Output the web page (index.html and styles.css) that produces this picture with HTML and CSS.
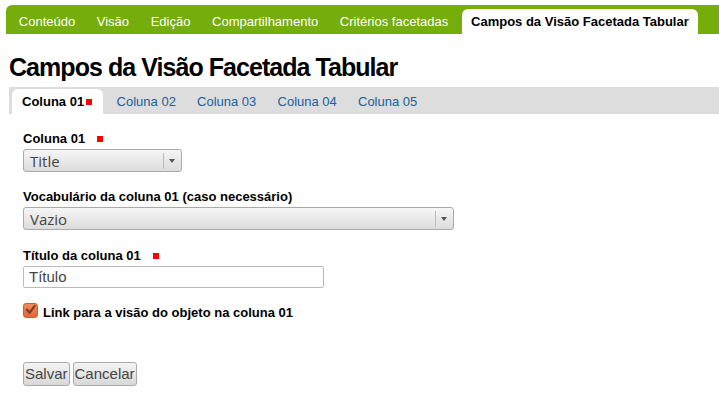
FILE: index.html
```html
<!DOCTYPE html>
<html lang="pt">
<head>
<meta charset="utf-8">
<title>Campos da Visão Facetada Tabular</title>
<link rel="stylesheet" href="styles.css">
</head>
<body>
<nav class="topnav">
  <a class="tnav">Conteúdo</a>
  <a class="tnav">Visão</a>
  <a class="tnav">Edição</a>
  <a class="tnav">Compartilhamento</a>
  <a class="tnav">Critérios facetadas</a>
  <a class="tnav active">Campos da Visão Facetada Tabular</a>
</nav>
<h1 class="title">Campos da Visão Facetada Tabular</h1>
<div class="subtabs">
  <a class="stab active">Coluna 01<span class="req req-tab"></span></a>
  <a class="stab">Coluna 02</a>
  <a class="stab">Coluna 03</a>
  <a class="stab">Coluna 04</a>
  <a class="stab">Coluna 05</a>
</div>
<form class="form">
  <div class="field f1">
    <label class="lbl">Coluna 01<span class="req"></span></label>
    <div class="select sel-small"><span class="sel-text">Title</span><span class="sel-arrow"></span></div>
  </div>
  <div class="field">
    <label class="lbl">Vocabulário da coluna 01 (caso necessário)</label>
    <div class="select sel-wide"><span class="sel-text">Vazio</span><span class="sel-arrow"></span></div>
  </div>
  <div class="field">
    <label class="lbl">Título da coluna 01<span class="req"></span></label>
    <div class="input">Título</div>
  </div>
  <div class="check-row">
    <span class="checkbox"><svg width="14" height="14" viewBox="0 0 14 14"><path d="M3 6.5 L6 10 L11.5 2.5" fill="none" stroke="#7a3a1e" stroke-width="2.2" stroke-linecap="round" stroke-linejoin="round"/></svg></span>
    <span class="check-label">Link para a visão do objeto na coluna 01</span>
  </div>
  <div class="buttons">
    <span class="btn">Salvar</span><span class="btn">Cancelar</span>
  </div>
</form>
</body>
</html>
```
FILE: styles.css
```css
* { box-sizing: border-box; }
body {
  margin: 0;
  background: #fff;
  font-family: "Liberation Sans", Arial, sans-serif;
  font-size: 13px;
  color: #000;
}
.topnav {
  margin: 5px 0 0 6px;
  height: 29px;
  background: #75ad0a;
  border-top-left-radius: 6px;
  display: flex;
  align-items: flex-end;
  padding-left: 2px;
}
.tnav {
  color: #fff;
  padding: 0 10.8px;
  height: 25px;
  line-height: 26px;
  white-space: nowrap;
}
.tnav.active {
  background: #fff;
  color: #000;
  font-weight: bold;
  padding: 0 9px;
  margin-left: 3px;
  border-radius: 6px 6px 0 0;
}
.title {
  margin: 18px 0 0 9px;
  font-size: 25px;
  line-height: 30px;
  font-weight: bold;
  letter-spacing: -0.95px;
}
.subtabs {
  margin: 5px 0 0 9px;
  height: 27px;
  background: #dddddd;
  display: flex;
  align-items: flex-end;
  padding-left: 3px;
}
.stab {
  color: #20609a;
  padding: 0 10.6px;
  height: 25px;
  line-height: 26px;
  white-space: nowrap;
}
.stab.active {
  background: #fff;
  color: #000;
  font-weight: bold;
  padding: 0 10px;
  width: 91px;
  margin-right: 3px;
  border-radius: 6px 6px 0 0;
}
.req {
  display: inline-block;
  width: 6px;
  height: 6px;
  background: #ff0000;
  margin-left: 12px;
  vertical-align: 1px;
}
.req.req-tab { margin-left: 2px; }
.form {
  padding: 17px 0 0 23px;
}
.field { margin-bottom: 18px; }
.field.f1 { margin-bottom: 17px; }
.lbl {
  display: block;
  font-weight: bold;
  line-height: 15px;
  margin-bottom: 3px;
}
.select {
  display: flex;
  align-items: center;
  height: 23px;
  border: 1px solid #aaa;
  border-radius: 3px;
  background: linear-gradient(#f6f6f6, #dcdcdc);
  font-family: "Open Sans", "Noto Sans", sans-serif;
  font-size: 15px;
  color: #444;
}
.sel-small { width: 159px; }
.sel-wide { width: 431px; }
.sel-text { flex: 1; padding-left: 6px; }
.sel-arrow {
  width: 18px;
  height: 16px;
  border-left: 1px solid #bbb;
  position: relative;
}
.sel-arrow::after {
  content: "";
  position: absolute;
  left: 5px;
  top: 6px;
  border-left: 3px solid transparent;
  border-right: 3px solid transparent;
  border-top: 4px solid #555;
}
.input {
  width: 301px;
  height: 22px;
  border: 1px solid #bbb;
  border-radius: 2px;
  padding-left: 5px;
  font-size: 15px;
  line-height: 20px;
  color: #444;
}
.check-row {
  display: flex;
  align-items: center;
  margin-top: -1px;
}
.checkbox {
  width: 15px;
  height: 15px;
  border-radius: 3px;
  background: linear-gradient(#f28a5e, #e0673a);
  border: 1px solid #c9602f;
  display: flex;
  align-items: center;
  justify-content: center;
  margin-top: -6px;
  margin-right: 5px;
}
.checkbox svg { display: block; }
.check-label {
  font-weight: bold;
  line-height: 16px;
}
.buttons {
  margin-top: 41px;
  display: flex;
  gap: 3px;
}
.btn {
  height: 24px;
  border: 1px solid #aaa;
  border-radius: 3px;
  background: linear-gradient(#f4f4f4, #d8d8d8);
  font-size: 15px;
  color: #444;
  line-height: 22px;
  padding: 0 1px;
}
```
